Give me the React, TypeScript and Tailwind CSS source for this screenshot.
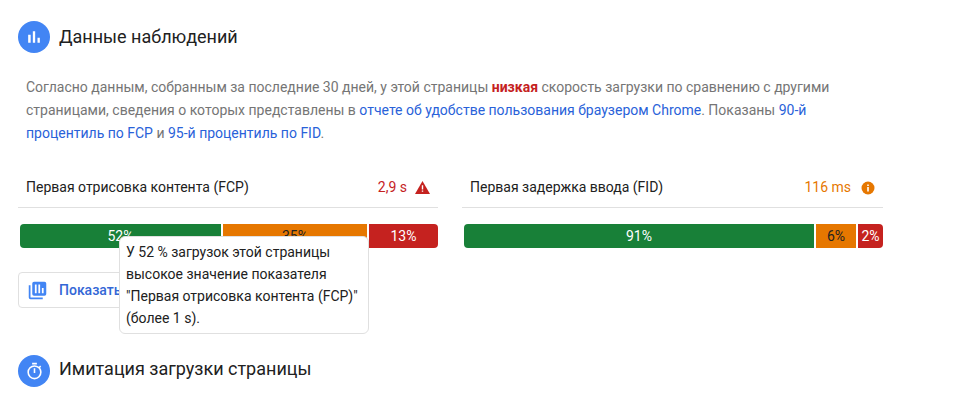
import * as React from "react";

function HeaderIcon({ children }: { children: React.ReactNode }) {
  return (
    <span className="flex h-8 w-8 shrink-0 items-center justify-center rounded-full bg-[#4285f4]">
      {children}
    </span>
  );
}

function Segment({
  width,
  color,
  label,
  dark,
  rounded,
}: {
  width: string;
  color: string;
  label: string;
  dark?: boolean;
  rounded?: string;
}) {
  return (
    <div className={`${width} ${color} ${rounded ?? ""} flex h-6 items-center justify-center text-[14px] ${dark ? "text-[#212121]" : "text-white"}`}>
      {label}
    </div>
  );
}

export default function App() {
  return (
    <div className="h-[402px] w-[966px] overflow-hidden bg-white font-['Roboto',sans-serif] text-[14px] text-[#212121]">
      <div className="ml-[18px] w-[865px] pt-[21px]">
        <div className="flex items-center gap-[9px]">
          <HeaderIcon>
            <svg width="20" height="20" viewBox="0 0 24 24" fill="#fff">
              <path d="M5 9.2h3V19H5zM10.6 5h2.8v14h-2.8zm5.6 8H19v6h-2.8z" />
            </svg>
          </HeaderIcon>
          <h2 className="text-[18px] leading-[32px] text-[#212121]">Данные наблюдений</h2>
        </div>

        <p className="mt-[23px] pl-2 text-[14px] leading-[23px] text-[#757575]">
          Согласно данным, собранным за последние 30 дней, у этой страницы{" "}
          <strong className="font-bold text-[#c5221f]">низкая</strong> скорость загрузки по сравнению с другими
          <br />
          страницами, сведения о которых представлены в{" "}
          <a className="text-[#2962d9]">отчете об удобстве пользования браузером Chrome</a>. Показаны{" "}
          <a className="text-[#2962d9]">90-й</a>
          <br />
          <a className="text-[#2962d9]">процентиль по FCP</a> и{" "}
          <a className="text-[#2962d9]">95-й процентиль по FID</a>.
        </p>

        <div className="mt-[22px] flex gap-6">
          <div className="relative w-[420px]">
            <div className="flex h-[41px] items-center justify-between border-b border-[#e0e0e0] pt-px pl-2 pr-[8px]">
              <span>Первая отрисовка контента (FCP)</span>
              <span className="flex items-center gap-[8px] text-[#c5221f]">
                2,9 s
                <svg width="15" height="13" viewBox="0 0 15 13">
                  <path d="M7.5 0 15 13H0z" fill="#c5221f" />
                  <path d="M6.8 4.2h1.4v4.4H6.8zm0 5.2h1.4v1.4H6.8z" fill="#fff" />
                </svg>
              </span>
            </div>
            <div className="mt-4 ml-[2px] flex gap-[2px]">
              <Segment width="w-[201px]" color="bg-[#188038]" label="52%" rounded="rounded-l-[4px]" />
              <Segment width="w-[144px]" color="bg-[#e67700]" label="35%" dark />
              <Segment width="w-[69px]" color="bg-[#c5221f]" label="13%" rounded="rounded-r-[4px]" />
            </div>
            <button className="mt-6 flex h-9 w-[300px] items-center gap-[11px] rounded-[4px] border border-[#e0e0e0] bg-white pl-[8px] text-left font-medium text-[#3367d6]">
              <svg width="21" height="21" viewBox="0 0 24 24" fill="#4285f4">
                <path d="M4 6H2v14a2 2 0 0 0 2 2h14v-2H4V6zm16-4H8a2 2 0 0 0-2 2v12a2 2 0 0 0 2 2h12a2 2 0 0 0 2-2V4a2 2 0 0 0-2-2zM11 15H9V5h2v10zm4 0h-2V5h2v10zm4 0h-2V9h2v6z" />
              </svg>
              Показать
            </button>
            <div className="absolute left-[101px] top-[69px] w-[250px] rounded-[6px] border border-[#e0e0e0] bg-white px-[6px] pt-[3.5px] pb-[4.5px] text-[14px] leading-[22px] text-[#212121]">
              У 52 % загрузок этой страницы
              <br />
              высокое значение показателя
              <br />
              "Первая отрисовка контента (FCP)"
              <br />
              (более 1 s).
            </div>
          </div>

          <div className="w-[421px]">
            <div className="flex h-[41px] items-center justify-between border-b border-[#e0e0e0] pt-px pl-2 pr-2">
              <span>Первая задержка ввода (FID)</span>
              <span className="flex items-center gap-[10px] text-[#e67700]">
                116 ms
                <svg width="14" height="14" viewBox="0 0 14 14">
                  <circle cx="7" cy="7" r="6.5" fill="#e67700" />
                  <path d="M6.2 6h1.6v4.4H6.2zm0-2.6h1.6V5H6.2z" fill="#fff" />
                </svg>
              </span>
            </div>
            <div className="mt-4 ml-[2px] flex gap-[2px]">
              <Segment width="w-[350px]" color="bg-[#188038]" label="91%" rounded="rounded-l-[4px]" />
              <Segment width="w-[40px]" color="bg-[#e67700]" label="6%" dark />
              <Segment width="w-[25px]" color="bg-[#c5221f]" label="2%" rounded="rounded-r-[4px]" />
            </div>
          </div>
        </div>

        <div className="mt-[45px] flex items-center gap-[9px]">
          <HeaderIcon>
            <svg width="19" height="19" viewBox="0 0 24 24" fill="#fff">
              <path d="M15 1H9v2h6V1zm-4 13h2V8h-2v6zm8.03-6.61 1.42-1.42c-.43-.51-.9-.99-1.41-1.41l-1.42 1.42A8.96 8.96 0 0 0 12 4a9 9 0 1 0 9 9c0-2.12-.74-4.07-1.97-5.61zM12 20a7 7 0 1 1 0-14 7 7 0 0 1 0 14z" />
            </svg>
          </HeaderIcon>
          <h2 className="pb-1 text-[18px] leading-[32px] text-[#212121]">Имитация загрузки страницы</h2>
        </div>
      </div>
    </div>
  );
}
